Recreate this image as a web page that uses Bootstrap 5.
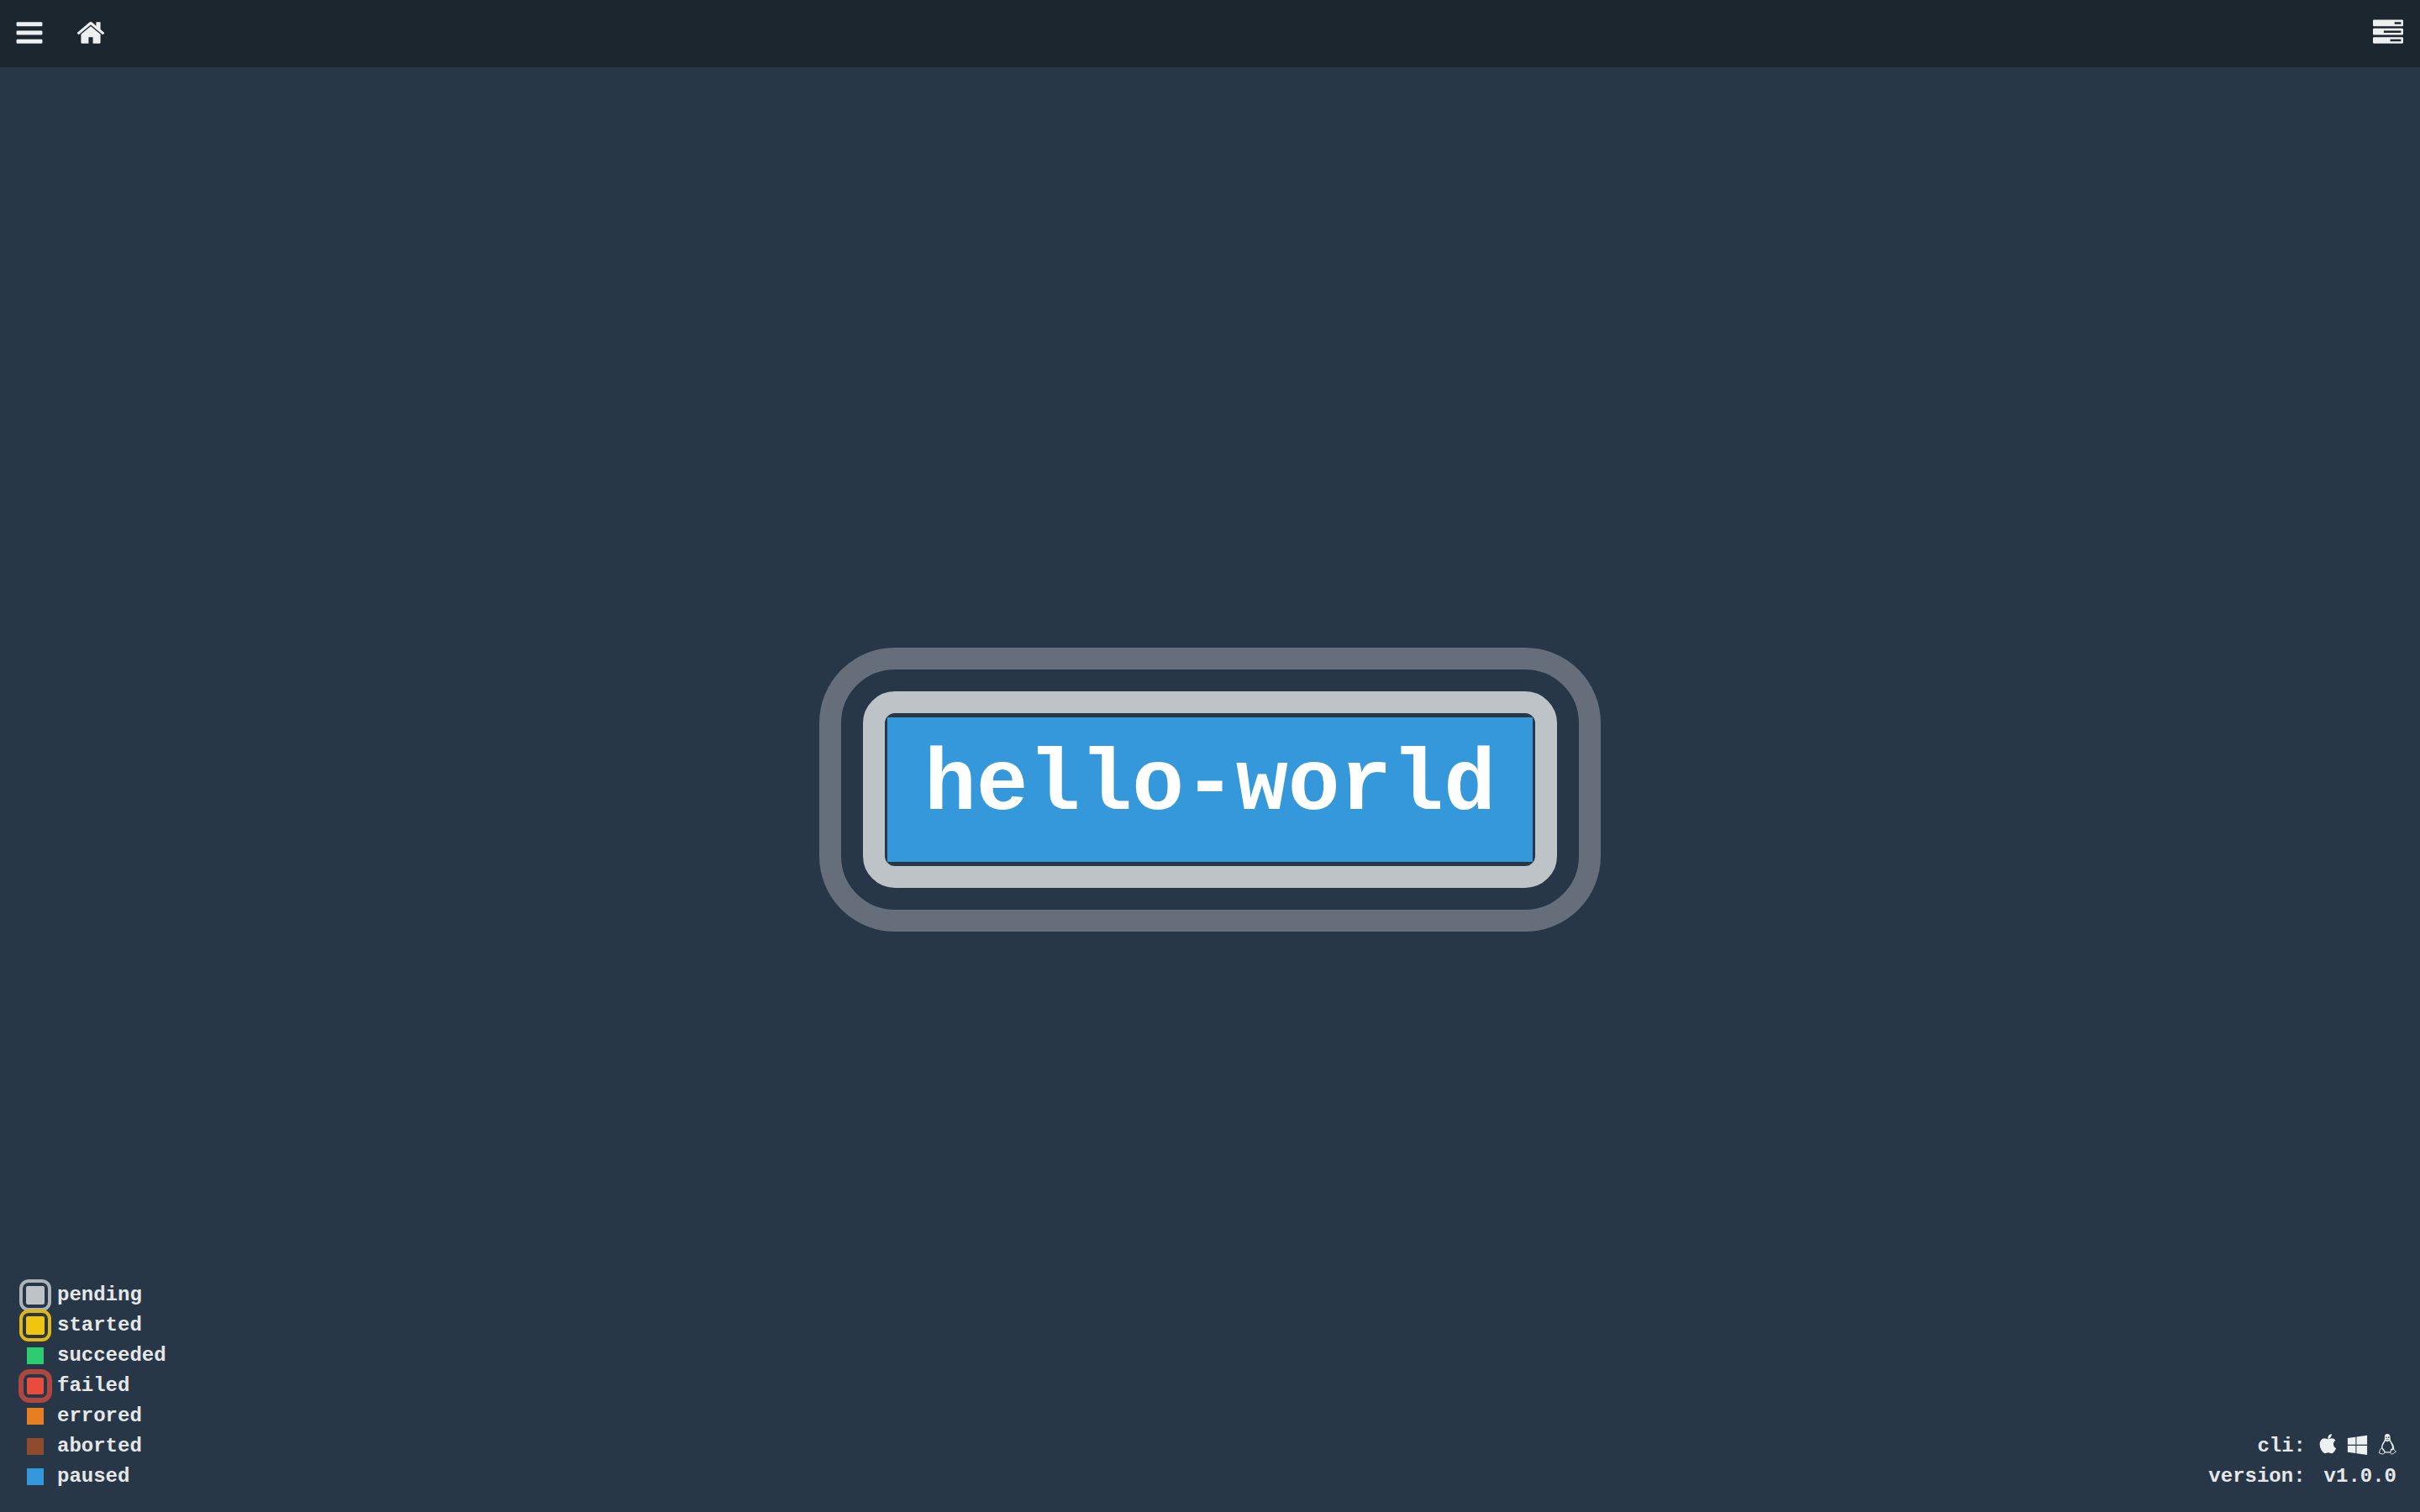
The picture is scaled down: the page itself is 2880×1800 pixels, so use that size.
<!DOCTYPE html>
<html lang="en">
<head>
<meta charset="utf-8">
<meta name="viewport" content="width=device-width, initial-scale=1">
<title>hello-world pipeline</title>
<link rel="stylesheet" href="https://cdn.jsdelivr.net/npm/bootstrap@5.3.0/dist/css/bootstrap.min.css">
<style>
  body { background: #273747; color: #e6e7e8; font: 700 24px/36px "Liberation Mono", monospace; }
  .topbar { background: #1b262f; height: 80px; padding: 0 20px 0 17px; }
  .topbar .btn { --bs-btn-border-width: 0; padding: 0; color: #ecf0f1; margin-top: -2px; }
  .topbar-left { gap: 37px; }
  .topbar svg { width: 36px; height: 36px; display: block; }
  .topbar svg, .cli-icons svg { fill: currentColor; }

  .stage { display: grid; }
  .stage > * { grid-area: 1 / 1; }

  .ring-outer { border: 26px solid #656e7a; border-radius: 90px; padding: 26px; }
  .ring-inner { border: 26px solid #bdc3c7; border-radius: 38px; padding: 5px 3px; }
  .job { background: #3498db; color: #fff; font-size: 103px; line-height: 103px; padding: 30px 44px 39px; }
  .job:hover { color: #fff; }

  .legend { padding: 0 0 24px 22px; }
  .legend li { height: 36px; gap: 6px; }
  .swatch-slot { width: 40px; }
  .swatch { width: 20px; height: 20px; background: var(--tone); }
  .halo { border: 4px solid var(--tone-ring); border-radius: 11px; padding: 4px; }
  .halo .swatch { width: 22px; height: 22px; border-radius: 2px; }
  .halo-wide { border-width: 6px; border-radius: 13px; }
  .halo-wide .swatch { width: 20px; height: 20px; }
  .pending { --tone: #bdc3c7; --tone-ring: #adb4b9; }
  .started { --tone: #f1c40f; --tone-ring: #e0b715; }
  .succeeded { --tone: #2ecc71; }
  .failed { --tone: #e74c3c; --tone-ring: #ad473f; }
  .errored { --tone: #e67e22; }
  .aborted { --tone: #8f4b2d; }
  .paused { --tone: #3498db; }

  .build-info { padding: 0 28px 24px 0; }
  .cli-row { gap: 14px; height: 36px; }
  .cli-icons { gap: 10px; padding-bottom: 5px; }
  .cli-icons a { color: #ecf0f1; }
  .cli-icons svg { width: 25px; height: 25px; display: block; }
  .cli-icons .tux { width: 24px; }
  .version-row { gap: 22px; }
</style>
</head>
<body class="d-flex flex-column min-vh-100">
<nav class="topbar d-flex align-items-center justify-content-between">
  <div class="topbar-left d-flex align-items-center">
    <button type="button" class="btn" aria-label="Menu">
      <svg viewBox="0 0 1792 1792" aria-hidden="true"><path d="M1664 1344v128q0 26-19 45t-45 19h-1408q-26 0-45-19t-19-45v-128q0-26 19-45t45-19h1408q26 0 45 19t19 45zm0-512v128q0 26-19 45t-45 19h-1408q-26 0-45-19t-19-45v-128q0-26 19-45t45-19h1408q26 0 45 19t19 45zm0-512v128q0 26-19 45t-45 19h-1408q-26 0-45-19t-19-45v-128q0-26 19-45t45-19h1408q26 0 45 19t19 45z"/></svg>
    </button>
    <a href="#" class="btn" aria-label="Home">
      <svg viewBox="0 0 1792 1792" aria-hidden="true"><path d="M1472 992v480q0 26-19 45t-45 19h-384v-384h-256v384h-384q-26 0-45-19t-19-45v-480q0-1 .5-3t.5-3l575-474 575 474q1 2 1 6zm223-69l-62 74q-8 9-21 11h-3q-13 0-21-7l-692-577-692 577q-12 8-24 7-13-2-21-11l-62-74q-8-10-7-23.5t11-21.5l719-599q32-26 76-26t76 26l244 204v-195q0-14 9-23t23-9h192q14 0 23 9t9 23v408l219 182q10 8 11 21.5t-7 23.5z"/></svg>
    </a>
  </div>
  <a href="#" class="btn" aria-label="Builds">
    <svg viewBox="0 0 1792 1792" aria-hidden="true"><path fill-rule="evenodd" d="M64 128h1664q64 0 64 64v256q0 64-64 64h-1664q-64 0-64-64v-256q0-64 64-64zM1280 256v128h384v-128zM64 640h1664q64 0 64 64v256q0 64-64 64h-1664q-64 0-64-64v-256q0-64 64-64zM640 768v128h1024v-128zM64 1152h1664q64 0 64 64v256q0 64-64 64h-1664q-64 0-64-64v-256q0-64 64-64zM1024 1280v128h640v-128z"/></svg>
  </a>
</nav>

<main class="stage flex-grow-1">
  <div class="d-flex align-items-center justify-content-center">
    <div class="ring-outer">
      <div class="ring-inner">
        <a href="#" class="job d-block text-decoration-none">hello-world</a>
      </div>
    </div>
  </div>

  <div class="d-flex justify-content-between align-items-end align-self-end">
    <ul class="legend list-unstyled mb-0">
      <li class="pending d-flex align-items-center"><span class="swatch-slot d-flex justify-content-center"><span class="halo"><span class="swatch d-block"></span></span></span>pending</li>
      <li class="started d-flex align-items-center"><span class="swatch-slot d-flex justify-content-center"><span class="halo"><span class="swatch d-block"></span></span></span>started</li>
      <li class="succeeded d-flex align-items-center"><span class="swatch-slot d-flex justify-content-center"><span class="swatch"></span></span>succeeded</li>
      <li class="failed d-flex align-items-center"><span class="swatch-slot d-flex justify-content-center"><span class="halo halo-wide"><span class="swatch d-block"></span></span></span>failed</li>
      <li class="errored d-flex align-items-center"><span class="swatch-slot d-flex justify-content-center"><span class="swatch"></span></span>errored</li>
      <li class="aborted d-flex align-items-center"><span class="swatch-slot d-flex justify-content-center"><span class="swatch"></span></span>aborted</li>
      <li class="paused d-flex align-items-center"><span class="swatch-slot d-flex justify-content-center"><span class="swatch"></span></span>paused</li>
    </ul>

    <div class="build-info">
      <div class="cli-row d-flex justify-content-end align-items-center">
        <span>cli:</span>
        <span class="cli-icons d-flex">
          <a href="#" aria-label="Download for macOS"><svg viewBox="0 0 1792 1792" aria-hidden="true"><path d="M1585 1215q-39 125-123 250-129 196-257 196-49 0-140-32-86-32-151-32-61 0-142 33-81 34-132 34-152 0-301-259-147-261-147-503 0-228 113-374 113-144 284-144 72 0 177 30 104 30 138 30 45 0 143-34 102-34 173-34 119 0 213 65 52 36 104 100-79 67-114 118-65 94-65 207 0 124 69 223t158 126zm-376-1173q0 61-29 136-30 75-93 138-54 54-108 72-37 11-104 17 3-149 78-257 74-107 250-148 1 3 2.500 11t2.500 11q0 4 .5 10t.5 10z"/></svg></a>
          <a href="#" aria-label="Download for Windows"><svg viewBox="0 0 1792 1792" aria-hidden="true"><path d="M746 1006v651l-682-94v-557h682zm0-743v659h-682v-565zm982 743v786l-907-125v-661h907zm0-878v794h-907v-669z"/></svg></a>
          <a href="#" aria-label="Download for Linux"><svg class="tux" viewBox="0 0 24 25" aria-hidden="true">
            <path fill-rule="evenodd" d="M13.200 0C10.800 0 9.800 1.600 9.900 3.800C10 6 10.100 7 8.900 8.800C7.400 11 6.200 13.400 6 16.200L5.400 18.300L9.600 22.400H17.400L21.200 18.600C21.500 15.400 20.300 12.400 18.400 10C16.900 8 16.600 6.800 16.600 4.400C16.600 1.400 15.300 0 13.200 0ZM11.100 8.200L13.100 9.400L15.600 7.900C16.400 10.200 19.200 13 19 17.200L17.200 18.200L16.800 21.200H10.600L10 19.800L7.400 16.200C7.200 13.200 9.600 11 11.100 8.200Z"/>
            <path fill="#273747" d="M11.200 3.600h1.300v1.500h-1.300zM13.900 3.600h1.500v1.500h-1.500zM11 6.300l2.200 1.100 2.400-1.200-2.400.2z"/>
            <path fill="#273747" stroke="currentColor" stroke-width=".9" stroke-linejoin="round" d="M6.600 17L9.600 21.200C10.400 23.200 8.800 24.300 7 23.900L3.500 22.900L4.100 19.300ZM17.500 18.400C18.200 19.600 19.500 19.300 20.700 18.100L21.600 19.600L23.500 21.100L19.900 23.600C18.300 24.600 16.800 24 16.900 22.300Z"/>
          </svg></a>
        </span>
      </div>
      <div class="version-row d-flex justify-content-end"><span>version:</span><span>v1.0.0</span></div>
    </div>
  </div>
</main>
<script src="https://cdn.jsdelivr.net/npm/bootstrap@5.3.0/dist/js/bootstrap.bundle.min.js"></script>
</body>
</html>
